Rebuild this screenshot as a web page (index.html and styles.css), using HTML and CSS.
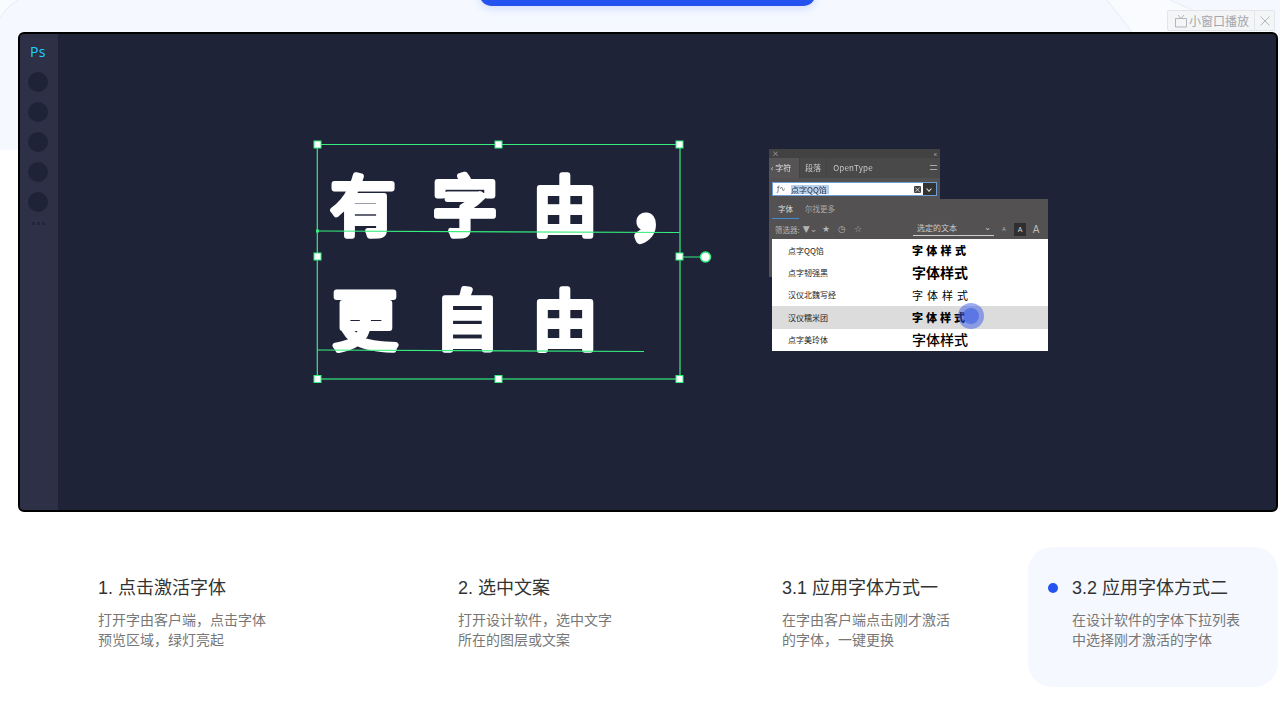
FILE: index.html
```html
<!DOCTYPE html>
<html lang="zh-CN">
<head>
<meta charset="utf-8">
<title>字由</title>
<link rel="stylesheet" href="styles.css">
</head>
<body>
<svg class="deco" width="1280" height="150" viewBox="0 0 1280 150" aria-hidden="true">
  <path class="deco-fill" d="M0 0H18C10 5 4 11 0 18Z"/>
  <path class="deco-fill" d="M1107 0H1170L1240 32H1132Z"/>
  <path class="deco-line" d="M18 0C10 5 4 11 0 18M1107 0L1132 32M1170 0L1197 12"/>
</svg>
<header class="top">
  <div class="cta"></div>
</header>
<div class="mini">
  <div class="mini-play">
    <svg class="mini-icon" width="14" height="14" viewBox="0 0 14 14"><path d="M1.500 4.500h11v8.500h-11zM4 1l3 3.500L10 1"/></svg>
    <span>小窗口播放</span>
  </div>
  <div class="mini-close">
    <svg width="10" height="10" viewBox="0 0 10 10"><path d="M.5.5l9 9M9.500.5l-9 9"/></svg>
  </div>
</div>
<main class="player">
  <aside class="rail">
    <div class="ps">Ps</div>
    <i class="tool"></i><i class="tool"></i><i class="tool"></i><i class="tool"></i><i class="tool"></i>
    <div class="more"><b></b><b></b><b></b></div>
  </aside>
  <section class="stage">
    <svg class="canvas" width="1218" height="476" viewBox="58 34 1218 476">
      <text class="big" x="363 465 565" y="230">有字由</text>
      <text class="big big-comma" x="630" y="232">，</text>
      <text class="big" x="365 467 565" y="344">更自由</text>
      <path class="sel" d="M317.300 379V144.500H680V379"/>
      <path class="sel-b" d="M317 379H680"/>
      <path class="base" d="M317.500 231L679.500 232.500M317.500 350L644 351.500M679.500 257H705"/>
      <rect class="base-dot" x="316" y="229.500" width="3" height="3"/>
      <rect class="handle" x="314" y="141" width="7" height="7"/>
      <rect class="handle" x="495" y="141" width="7" height="7"/>
      <rect class="handle" x="676" y="141" width="7" height="7"/>
      <rect class="handle" x="314" y="253" width="7" height="7"/>
      <rect class="handle" x="676" y="253" width="7" height="7"/>
      <rect class="handle" x="314" y="375.500" width="7" height="7"/>
      <rect class="handle" x="495" y="375.500" width="7" height="7"/>
      <rect class="handle" x="676" y="375.500" width="7" height="7"/>
      <circle class="rot" cx="705.500" cy="257" r="5"/>
    </svg>
    <div class="fontui">
      <div class="back">
        <div class="back-top"><span>×</span><span>«</span></div>
        <div class="tabs">
          <span class="tab on">‹ 字符</span><span class="tab">段落</span><span class="tab">OpenType</span>
          <span class="burger"></span>
        </div>
        <div class="searchrow">
          <div class="search">
            <span class="glyph">ƒ∿</span><span class="sel-text">点字QQ馅</span>
            <span class="clear">×</span>
          </div>
          <div class="drop"></div>
        </div>
      </div>
      <div class="front">
        <div class="ftabs"><span class="ftab on">字体</span><span class="ftab">尔找更多</span></div>
        <div class="filters">
          <span class="flabel">筛选器:</span>
          <span class="fico">▼⌄</span><span class="fico">★</span><span class="fico">◷</span><span class="fico">☆</span>
          <span class="chosen">选定的文本<em>⌄</em></span>
          <span class="a a1">A</span><span class="a a2">A</span><span class="a a3">A</span>
        </div>
        <ul class="rows">
          <li class="row"><span class="name">点字QQ馅</span><span class="sample s1">字体样式</span></li>
          <li class="row"><span class="name">点字韧强黑</span><span class="sample s2">字体样式</span></li>
          <li class="row"><span class="name">汉仪北魏写经</span><span class="sample s3">字体样式</span></li>
          <li class="row hot"><span class="name">汉仪糯米团</span><span class="sample s4">字体样式</span></li>
          <li class="row"><span class="name">点字美玲体</span><span class="sample s5">字体样式</span></li>
        </ul>
        <div class="cursor"></div>
      </div>
    </div>
  </section>
</main>
<section class="steps">
  <article class="step">
    <h3>1. 点击激活字体</h3>
    <p>打开字由客户端，点击字体<br>预览区域，绿灯亮起</p>
  </article>
  <article class="step">
    <h3>2. 选中文案</h3>
    <p>打开设计软件，选中文字<br>所在的图层或文案</p>
  </article>
  <article class="step">
    <h3>3.1 应用字体方式一</h3>
    <p>在字由客户端点击刚才激活<br>的字体，一键更换</p>
  </article>
  <article class="step active">
    <h3>3.2 应用字体方式二</h3>
    <p>在设计软件的字体下拉列表<br>中选择刚才激活的字体</p>
  </article>
</section>
</body>
</html>
```
FILE: styles.css
```css
* { box-sizing: border-box; margin: 0; padding: 0; }
html, body { width: 1280px; height: 720px; overflow: hidden; }
body {
  position: relative;
  background: linear-gradient(#f5f9ff 150px, #fff 150px);
  font-family: "Liberation Sans", "Noto Sans CJK SC", sans-serif;
  color: #333;
}
.deco { position: absolute; left: 0; top: 0; }
.deco-fill { fill: #f9fbfe; }
.deco-line { fill: none; stroke: #e6ebf2; stroke-width: 1; }

.top { position: relative; height: 32px; display: flex; justify-content: center; padding-left: 15px; }
.cta {
  width: 337px; height: 26px; margin-top: -20px;
  background: #2553f0; border-radius: 20px;
  box-shadow: 0 3px 10px rgba(37, 83, 240, .16);
}

.mini { position: absolute; left: 1167px; top: 10px; height: 21px; display: flex; z-index: 2; }
.mini-play, .mini-close {
  display: flex; align-items: center; height: 21px;
  background: #f4f5f7; border: 1px solid #e3e5e9;
  color: #a3a6ac; font-size: 12px;
}
.mini-play { width: 88px; padding-left: 6px; gap: 1px; border-radius: 2px 0 0 2px; }
.mini-close { width: 20px; justify-content: center; border-left: 0; border-radius: 0 2px 2px 0; }
.mini-icon path, .mini-close path { fill: none; stroke: #b3b6bb; stroke-width: 1; }

.player {
  display: flex; position: relative;
  width: 1260px; height: 480px; margin-left: 18px;
  background: #1e2338; border: 2px solid #000; border-radius: 6px;
  overflow: hidden;
}
.rail {
  width: 38px; flex: none; background: #2e3048; padding-right: 2px;
  display: flex; flex-direction: column; align-items: center;
}
.ps {
  height: 38px; padding-top: 10px; font-size: 14px; line-height: 16px; color: #1fd0ff;
  font-family: "Open Sans", sans-serif; font-weight: 400; letter-spacing: .4px;
}
.tool { display: block; width: 20px; height: 20px; margin-bottom: 10px; flex: none; border-radius: 50%; background: #1e2338; }
.more { display: flex; gap: 2px; }
.more b { width: 3px; height: 3px; background: #1e2338; opacity: .75; }

.stage { flex: 1; position: relative; }
.canvas { display: block; }
.big {
  font-family: "Noto Sans CJK SC", sans-serif; font-weight: 400; font-size: 65px;
  text-anchor: middle; fill: #fff; stroke: #fff; stroke-width: 6px;
  stroke-linejoin: round; stroke-linecap: round;
}
.big-comma { text-anchor: start; stroke-width: 9px; }
.sel { fill: none; stroke: #35ee7e; stroke-width: 1.200; }
.sel-b { fill: none; stroke: #2a9a5f; stroke-width: 2; }
.base { fill: none; stroke: #35ee7e; stroke-width: 1.200; }
.base-dot { fill: #35ee7e; }
.handle { fill: #fff; stroke: #35ee7e; stroke-width: 1; }
.rot { fill: #fff; stroke: #35ee7e; stroke-width: 1.500; }

.fontui {
  position: absolute; left: 711px; top: 115px; width: 279px; height: 202px;
  font-family: "Noto Sans CJK SC", sans-serif; font-size: 8px; color: #c8c8c8;
  filter: blur(.35px);
}
.back { width: 171px; height: 128px; background: #535151; }
.back-top {
  height: 9px; background: #434242; display: flex; justify-content: space-between;
  padding: 0 3px; font-size: 7px; line-height: 8px; color: #bbb;
}
.tabs { height: 20px; display: flex; align-items: center; background: #4a4949; position: relative; }
.tab { height: 20px; line-height: 20px; padding: 0 5px; border-right: 1px solid #434242; white-space: nowrap; }
.tab.on { width: 31px; padding: 0 0 0 2px; background: #565454; color: #e0e0e0; }
.tab:nth-child(2) { width: 27px; text-align: center; padding: 0; }
.tab:nth-child(3) { width: 52px; text-align: center; padding: 0; border: 0; letter-spacing: .2px; }
.burger { position: absolute; right: 3px; top: 7px; width: 7px; height: 5px; border-top: 1px solid #aaa; border-bottom: 1px solid #aaa; }
.searchrow { display: flex; margin: 4px 3px 0; height: 14px; border: 1px solid #6d9fd6; }
.search { flex: 1; background: #fff; display: flex; align-items: center; padding-left: 4px; position: relative; color: #333; line-height: 10px; }
.glyph { width: 14px; font-size: 7px; color: #444; font-family: "DejaVu Sans", sans-serif; }
.sel-text { width: 38px; background: #b3d0ee; color: #334; white-space: nowrap; height: 9px; line-height: 9px; }
.clear { position: absolute; right: 2px; top: 3px; width: 7px; height: 7px; background: #444; color: #fff; font-size: 7px; line-height: 6px; text-align: center; border-radius: 1px; }
.drop { width: 13px; background: #333; position: relative; }
.drop::after { content: ""; position: absolute; left: 4px; top: 4px; width: 3px; height: 3px; border-right: 1px solid #ddd; border-bottom: 1px solid #ddd; transform: rotate(45deg); }

.front { position: absolute; left: 3px; top: 50px; width: 276px; height: 152px; background: #535151; display: flex; flex-direction: column; }
.ftabs { height: 20px; display: flex; align-items: center; }
.ftab { height: 20px; line-height: 20px; white-space: nowrap; font-size: 7.500px; }
.ftab.on { width: 27px; text-align: center; color: #ddd; border-bottom: 1px solid #3f8bd0; }
.ftab:last-child { padding-left: 6px; color: #aaa; }
.filters { height: 20px; display: flex; align-items: center; padding: 0 2px 0 3px; white-space: nowrap; color: #b5b5b5; }
.flabel { width: 27px; font-size: 7.500px; }
.fico { width: 16px; text-align: center; font-size: 9px; line-height: 10px; font-family: "DejaVu Sans", sans-serif; }
.chosen { width: 81px; height: 14px; line-height: 12px; margin-left: auto; border-bottom: 1px solid #ccc; padding-left: 4px; display: flex; justify-content: space-between; color: #ccc; }
.chosen em { font-style: normal; padding-right: 3px; font-family: "DejaVu Sans", sans-serif; }
.a { font-family: "Liberation Sans", sans-serif; text-align: center; color: #bbb; }
.a1 { width: 20px; font-size: 5px; }
.a2 { width: 12px; height: 13px; line-height: 13px; background: #2f2f2f; color: #ddd; font-size: 7px; }
.a3 { width: 20px; font-size: 10px; }
.rows { flex: 1; list-style: none; background: #fff; display: flex; flex-direction: column; color: #222; }
.row { height: 22.400px; display: flex; align-items: center; padding-left: 16px; }
.row.hot { background: #dcdcdc; }
.name { width: 124px; font-size: 8px; white-space: nowrap; }
.sample { color: #000; white-space: nowrap; line-height: 20px; }
.s1 { font-size: 11px; font-weight: 900; letter-spacing: 3.300px; }
.s2 { font-size: 14px; font-weight: 700; padding-bottom: 1px; }
.s3 { font-size: 11px; letter-spacing: 4px; }
.s4 { font-size: 11px; font-weight: 900; letter-spacing: 3px; }
.s5 { font-size: 14px; font-weight: 500; padding-bottom: 1px; }
.cursor {
  position: absolute; left: 186px; top: 104px; width: 26px; height: 26px;
  border-radius: 50%; background: rgba(55, 90, 230, .5);
}
.cursor::after {
  content: ""; position: absolute; left: 5px; top: 5px; width: 16px; height: 16px;
  border-radius: 50%; background: rgba(55, 90, 230, .55);
}

.steps {
  display: grid; grid-template-columns: 360px 324px 246px 250px;
  margin: 35px 0 0 98px;
}
.step { height: 140px; padding-top: 28px; }
.step h3 { font-size: 18px; font-weight: 400; line-height: 26px; color: #333; }
.step p { margin-top: 9px; font-size: 14px; line-height: 20px; color: #777; }
.step.active { position: relative; padding-left: 44px; background: #f5f9ff; border-radius: 24px; }
.step.active::before {
  content: ""; position: absolute; left: 20px; top: 36px;
  width: 10px; height: 10px; border-radius: 50%; background: #2553f0;
}
```
